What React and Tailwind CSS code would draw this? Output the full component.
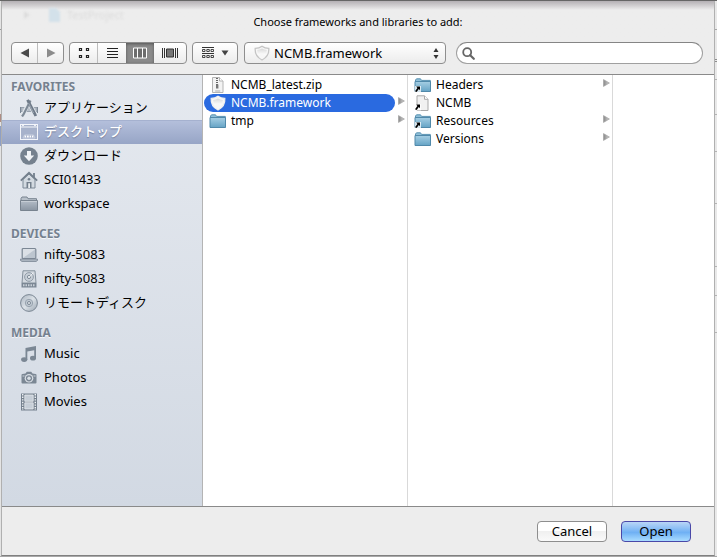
import React from "react";

const JP = "font-['Noto_Sans','Noto_Sans_CJK_JP',sans-serif]";

function Svg({ w = 18, h = 18, children }) {
  return (
    <svg width={w} height={h} viewBox={`0 0 ${w} ${h}`} className="block shrink-0" aria-hidden="true">
      {children}
    </svg>
  );
}

function Gradients() {
  return (
    <svg width="0" height="0" className="absolute" aria-hidden="true">
      <defs>
        <linearGradient id="steel" x1="0" y1="0" x2="0" y2="1">
          <stop offset="0" stopColor="#b4bdc8" />
          <stop offset="1" stopColor="#8a95a2" />
        </linearGradient>
        <linearGradient id="pale" x1="0" y1="0" x2="1" y2="1">
          <stop offset="0" stopColor="#a9b3be" />
          <stop offset="0.5" stopColor="#dbe1e7" />
          <stop offset="1" stopColor="#98a4b0" />
        </linearGradient>
        <linearGradient id="blueFolder" x1="0" y1="0" x2="0" y2="1">
          <stop offset="0" stopColor="#a6cfe4" />
          <stop offset="1" stopColor="#65a3c5" />
        </linearGradient>
        <linearGradient id="shieldFill" x1="0" y1="0" x2="0" y2="1">
          <stop offset="0" stopColor="#d9d9d9" />
          <stop offset="1" stopColor="#ffffff" />
        </linearGradient>
        <linearGradient id="arrowFill" x1="0" y1="0" x2="1" y2="0">
          <stop offset="0" stopColor="#888888" />
          <stop offset="1" stopColor="#d4d4d4" />
        </linearGradient>
      </defs>
    </svg>
  );
}

const AppsIcon = () => (
  <Svg>
    <path d="M1 8.500h16v4H1z" fill="#b4bdc7" stroke="#8a95a2" strokeWidth=".8" />
    <path d="M.5 8v6M17.500 8v6" stroke="#7d8996" />
    <path d="M9.500 2 2.800 16.500" stroke="#e2e7ec" strokeWidth="4" />
    <path d="M8 2 15.500 16" stroke="#e2e7ec" strokeWidth="4.500" />
    <path d="M10.500 1.500 3.500 15.500 2 17.500" fill="none" stroke="#7d8996" strokeWidth="2.200" />
    <path d="M7.500 .8 14.600 14.500l1.200 2.500" fill="none" stroke="#6f7b89" strokeWidth="2.800" />
    <path d="M8.500 4 13.600 14" stroke="#a9b3be" strokeWidth=".8" />
  </Svg>
);

const DesktopIcon = () => (
  <Svg>
    <rect x=".5" y="1.5" width="17" height="15" fill="#a7b2cb" stroke="#f4f6fb" />
    <path d="M1 4h16" stroke="#f4f6fb" />
    <path d="M2 2.600h2M14 2.600h2" stroke="#f4f6fb" />
    <path d="M3 15 4.500 12h9l1.500 3z" fill="#8f9cbb" stroke="#dfe4f0" strokeWidth=".6" />
    <path d="M4.500 13.500h1.800M7 13.500h1.800M9.500 13.500h1.800M12 13.500h1.500" stroke="#fff" strokeWidth="1.800" />
  </Svg>
);

const DownloadIcon = () => (
  <Svg>
    <circle cx="9" cy="9" r="8.8" fill="#75818e" />
    <path d="M7 4h4v4.500h3.200L9 14.200 3.800 8.500H7z" fill="#f0f3f6" />
  </Svg>
);

const HomeIcon = () => (
  <Svg>
    <path d="M13 2h2v5h-2z" fill="#7d8996" />
    <path d="M3 8.500 9 3l6 5.500v8.500H3z" fill="#d3dae1" stroke="#7d8996" />
    <path d="M.8 9.600 9 1.800l8.200 7.800" fill="none" stroke="#74808d" strokeWidth="1.800" />
    <circle cx="9" cy="8.200" r="1.300" fill="#74808d" />
    <path d="M6.500 11h5v6h-5z" fill="#74808d" />
    <path d="M8.200 12.200h1.800V17H8.200z" fill="#e9edf0" />
  </Svg>
);

const SideFolderIcon = () => (
  <Svg>
    <path d="M1 14V3.500L2 2h5l1 1.700h8.500V14z" fill="#b9c1ca" stroke="#78838f" />
    <path d="M.5 5.500h17v10H.5z" fill="url(#steel)" stroke="#78838f" />
    <path d="M1 6.500h16" stroke="#c6cdd5" />
  </Svg>
);

const LaptopIcon = () => (
  <Svg>
    <rect x="2.200" y="2.500" width="13.600" height="10" rx="1" fill="#dbe0e6" stroke="#7b8794" strokeWidth="1.200" />
    <path d="M3 12 15 3.500V12z" fill="#bcc5cf" />
    <path d="M.5 13h17v1.500l-1.500 1H2l-1.500-1z" fill="#aab4bf" stroke="#7b8794" strokeWidth=".8" />
  </Svg>
);

const DriveIcon = () => (
  <Svg>
    <path d="M3 .800h12l1 12.200H2z" fill="#d3d9e0" stroke="#84909c" />
    <circle cx="9" cy="7" r="4.400" fill="#c6ced6" stroke="#929da9" />
    <circle cx="9" cy="7" r="1.600" fill="#e9edf0" stroke="#808c99" />
    <path d="M9.500 7 13 3" stroke="#f2f4f6" />
    <path d="M1.500 13h15v4.500h-15z" fill="#7b8794" />
    <path d="M3 15.300h12" stroke="#c9d0d8" strokeWidth="2" strokeDasharray="1.5 1" />
  </Svg>
);

const DiscIcon = () => (
  <Svg>
    <circle cx="9" cy="9" r="8.4" fill="url(#pale)" stroke="#7b8794" />
    <circle cx="9" cy="9" r="3.7" fill="#c0c9d2" stroke="#98a3af" />
    <circle cx="9" cy="9" r="1.500" fill="#e6eaee" stroke="#7b8794" />
  </Svg>
);

const MusicIcon = () => (
  <Svg>
    <path d="M5.500 3 16 1v12.500h-1.800V5.300L7.300 6.600V15H5.500z" fill="#7b8794" />
    <ellipse cx="4.200" cy="14.600" rx="3.100" ry="2.400" fill="#7b8794" />
    <ellipse cx="13" cy="13.200" rx="3" ry="2.400" fill="#7b8794" />
  </Svg>
);

const CameraIcon = () => (
  <Svg>
    <path d="M2.500 5 5.500 4.500 6.800 2.800h4.400L12.500 4.500l3 .5q1 .2 1 1v7.500q0 1-1 1h-13q-1 0-1-1V6q0-1 1-1z" fill="#7b8794" />
    <circle cx="9" cy="9.300" r="4.300" fill="#d9dfe5" />
    <circle cx="9" cy="9.300" r="3.100" fill="#7b8794" />
    <circle cx="9" cy="9.300" r="1.700" fill="#d9dfe5" />
    <path d="M2.500 7h2M13.500 7h2" stroke="#cdd4db" />
  </Svg>
);

const FilmIcon = () => (
  <Svg>
    <path d="M1 .5h16v17H1z" fill="#75818e" />
    <path d="M2.700 1v16M15.300 1v16" stroke="#eef1f4" strokeWidth="1.400" strokeDasharray="1.4 1.2" />
    <path d="M4.800 2h8.400v6.300H4.800zM4.800 9.800h8.400V16H4.800z" fill="#c6ced7" stroke="#e8ecf0" strokeWidth=".8" />
  </Svg>
);

const AliasArrow = () => (
  <g>
    <path d="M1 9h6v6.500H1z" fill="#fff" opacity=".75" />
    <path d="M2.200 9.500H6v3.800L4.800 12 2.600 15 1 14.300l2.400-3.400z" fill="#000" />
  </g>
);

const BlueFolder = ({ alias }) => (
  <Svg w={18} h={16}>
    <path d="M1.500 14V3L2.500 1.800h4L7.500 3.400h8.800V14z" fill="#8fbfd8" stroke="#5b93b3" />
    <path d="M1 4.500h15.500v10H1z" fill="url(#blueFolder)" stroke="#5089aa" />
    {alias && <AliasArrow />}
  </Svg>
);

const PageAlias = () => (
  <Svg w={18} h={16}>
    <path d="M3 .8h7.500L14 4.300v11.200H3z" fill="#f1f1f1" stroke="#a9a9a9" />
    <path d="M10.500.8v3.500H14" fill="#fff" stroke="#a9a9a9" />
    <AliasArrow />
  </Svg>
);

const ZipIcon = () => (
  <Svg w={18} h={16}>
    <path d="M3.500.5h7L14 4v11.500H3.500z" fill="#f3f3f3" stroke="#b4b4b4" />
    <path d="M10.500.5V4H14" fill="#fff" stroke="#b4b4b4" />
    <path d="M8 1v7" stroke="#666" strokeWidth="2" strokeDasharray="1 1" />
    <path d="M7 7.500h2.400v4H7z" fill="#777" />
    <path d="M6.200 14h5" stroke="#999" strokeWidth=".8" />
  </Svg>
);

const Shield = ({ outline = "#eeeeee" }) => (
  <Svg w={18} h={16}>
    <path
      d="M9 1.200Q11.800 3.200 15.800 3.400q.6 8-6.800 11.600Q1.600 11.400 2.200 3.400 6.200 3.200 9 1.200z"
      fill="#f7f7f7"
      stroke={outline}
      strokeWidth="1.300"
    />
    <path d="M9 3.600q2.200 1.300 4.800 1.500-.2 4-1.600 5L9 8.300 5.800 10.100q-1.400-1-1.600-5Q6.800 4.900 9 3.600z" fill="url(#shieldFill)" />
  </Svg>
);

const RowArrow = () => (
  <svg width="7" height="8" viewBox="0 0 7 8" className="mb-1 shrink-0" aria-hidden="true">
    <path d="M.5.600 6.400 4 .5 7.400z" fill="url(#arrowFill)" stroke="#a4a4a4" strokeWidth=".7" />
  </svg>
);

const sections = [
  {
    title: "FAVORITES",
    items: [
      { label: "アプリケーション", Icon: AppsIcon },
      { label: "デスクトップ", Icon: DesktopIcon, selected: true },
      { label: "ダウンロード", Icon: DownloadIcon },
      { label: "SCI01433", Icon: HomeIcon },
      { label: "workspace", Icon: SideFolderIcon },
    ],
  },
  {
    title: "DEVICES",
    items: [
      { label: "nifty-5083", Icon: LaptopIcon },
      { label: "nifty-5083", Icon: DriveIcon },
      { label: "リモートディスク", Icon: DiscIcon },
    ],
  },
  {
    title: "MEDIA",
    items: [
      { label: "Music", Icon: MusicIcon },
      { label: "Photos", Icon: CameraIcon },
      { label: "Movies", Icon: FilmIcon },
    ],
  },
];

function Sidebar() {
  return (
    <nav className="w-[201px] shrink-0 border-r border-[#b4b4b4] bg-linear-to-b from-[#e5e9ef] to-[#d2d9e3] pt-px">
      {sections.map((s, i) => (
        <section key={s.title}>
          <h2
            className={
              "flex items-end pl-[9px] text-[12px] leading-[18px] font-bold text-[#75818f] [text-shadow:0_1px_0_#f3f5f8] " +
              (i === 0 ? "h-5" : "h-[27px]")
            }
          >
            {s.title}
          </h2>
          <ul>
            {s.items.map(({ label, Icon, selected }, j) => (
              <li key={j}>
                <button
                  type="button"
                  className={
                    "flex h-6 w-full items-center gap-1.5 pl-[18px] text-left text-[13px] " +
                    (selected
                      ? "bg-linear-to-b from-[#b5c0dc] to-[#97a5c6] font-medium text-white shadow-[inset_0_1px_0_#a5b1cf] [text-shadow:0_1px_1px_#6f7c9c]"
                      : "text-black")
                  }
                >
                  <Icon />
                  {label}
                </button>
              </li>
            ))}
          </ul>
        </section>
      ))}
    </nav>
  );
}

function FileRow({ icon, label, arrow, selected }) {
  return (
    <li className="flex h-[18px] items-center justify-between pr-[2px]">
      <button
        type="button"
        className={
          "flex h-[18px] w-[191px] items-center gap-1 rounded-full pl-[5px] text-left text-[12px] " +
          (selected ? "bg-[#2a6ae0] text-white" : "text-black")
        }
      >
        {icon}
        {label}
      </button>
      {arrow && <RowArrow />}
    </li>
  );
}

const seg = "flex h-full items-center justify-center";
const box = "flex h-[22px] shrink-0 items-stretch overflow-hidden rounded-[4px] border border-[#8e8e8e] bg-linear-to-b from-white to-[#ececec]";

function Toolbar() {
  return (
    <div className="flex items-center pt-[7px] pr-[11px] pl-[9px]">
      <div className={box + " w-[53px]"}>
        <button type="button" aria-label="Back" className={seg + " w-[26px] border-r border-[#bdbdbd]"}>
          <Svg w={10} h={10}><path d="M9 .5v9L.5 5z" fill="#4a4a4a" /></Svg>
        </button>
        <button type="button" aria-label="Forward" className={seg + " flex-1"}>
          <Svg w={10} h={10}><path d="M1 .5v9L9.500 5z" fill="#8c8c8c" /></Svg>
        </button>
      </div>
      <div className={box + " ml-[5px] w-[118px]"}>
        <button type="button" aria-label="Icon view" className={seg + " w-7 border-r border-[#bdbdbd]"}>
          <Svg w={12} h={12}>
            <path d="M1.500 1.500h2v2h-2zM8.500 1.500h2v2h-2zM1.500 8.500h2v2h-2zM8.500 8.500h2v2h-2z" fill="none" stroke="#222" strokeWidth="1.200" />
          </Svg>
        </button>
        <button type="button" aria-label="List view" className={seg + " w-7"}>
          <Svg w={11} h={12}><path d="M0 1.500h11M0 4.500h11M0 7.500h11M0 10.500h11" stroke="#222" /></Svg>
        </button>
        <button
          type="button"
          aria-label="Column view"
          aria-pressed="true"
          className={seg + " w-7 bg-[#8a8a8a] shadow-[inset_0_1px_3px_#555]"}
        >
          <Svg w={14} h={12}>
            <path d="M.5 1h13v10H.5zM4.500 1v10M9.500 1v10" fill="#6d6d6d" stroke="#fff" />
          </Svg>
        </button>
        <button type="button" aria-label="Cover Flow view" className={seg + " flex-1"}>
          <Svg w={16} h={12}>
            <path d="M4.500 2h7v8h-7z" fill="#777" stroke="#333" />
            <path d="M.5 1v10M2.500 1v10M13.500 1v10M15.500 1v10" stroke="#333" />
          </Svg>
        </button>
      </div>
      <div className={box + " ml-[5px] w-[46px]"}>
        <button type="button" aria-label="Arrange items" className={seg + " w-full gap-[7px]"}>
          <Svg w={12} h={12}>
            <path d="M0 .5h12M0 6.500h12" stroke="#333" />
            <path d="M.5 2.500H3v2H.5zM4.800 2.500h2.500v2H4.800zM9 2.500h2.500v2H9zM.5 8.500H3v2H.5zM4.800 8.500h2.500v2H4.800zM9 8.500h2.500v2H9z" fill="none" stroke="#333" strokeWidth=".9" />
          </Svg>
          <Svg w={8} h={6}><path d="M.5.500h7L4 5.500z" fill="#444" /></Svg>
        </button>
      </div>
      <div className={box + " relative ml-1.5 w-[202px]"}>
        <select
          aria-label="Location"
          className="w-full appearance-none bg-transparent pl-[29px] text-[13px] leading-5 text-black outline-none"
        >
          <option>NCMB.framework</option>
        </select>
        <span className="pointer-events-none absolute inset-y-0 left-2 flex items-center">
          <Shield outline="#c4c4c4" />
        </span>
        <span className="pointer-events-none absolute inset-y-0 right-1.5 flex items-center">
          <Svg w={6} h={11}><path d="M3 0 5.500 4h-5zM3 11 .5 7h5z" fill="#333" /></Svg>
        </span>
      </div>
      <label className="ml-2.5 flex h-[22px] min-w-0 flex-1 items-center rounded-full border border-[#a0a0a0] border-t-[#858585] bg-white pl-[5px]">
        <Svg w={13} h={13}>
          <circle cx="5.200" cy="5.200" r="4" fill="none" stroke="#666" strokeWidth="1.800" />
          <path d="M8.200 8.200l3.600 3.600" stroke="#666" strokeWidth="2.200" strokeLinecap="round" />
        </Svg>
        <input type="search" aria-label="Search" className="min-w-0 flex-1 bg-transparent px-1 text-[13px] outline-none" />
      </label>
    </div>
  );
}

const dialogButton = "h-[21px] w-[70px] rounded-[4px] border text-[13px] leading-[19px] text-black";

/* Slivers of the project window that show on either side of the sheet. */
function LeftEdge() {
  return (
    <div aria-hidden="true" className="flex w-px shrink-0 flex-col bg-[#e4e4e4]">
      <span className="mt-7 h-px bg-[#999999]" />
      <span className="mt-[84px] h-2 bg-[#b08d84]" />
      <span className="mt-1 h-5 bg-[#8f9fc4]" />
    </div>
  );
}

function RightEdge() {
  return (
    <div aria-hidden="true" className="flex w-[2px] shrink-0 flex-col bg-[#e9e9e9]">
      <span className="mt-7 h-px bg-[#a8a8a8]" />
      <span className="mt-[29px] h-[3px] border-y border-[#8e8e8e]" />
      <span className="mt-[17px] h-px bg-[#b4b4b4]" />
      <span className="mt-[34px] h-px bg-[#b4b4b4]" />
      <span className="mt-9 h-px bg-[#b4b4b4]" />
      <span className="mt-[51px] h-px bg-[#b4b4b4]" />
      <span className="mt-[62px] h-px bg-[#b4b4b4]" />
      <span className="mt-7 h-px bg-[#b4b4b4]" />
      <span className="mt-9 h-px bg-[#b4b4b4]" />
    </div>
  );
}

export default function App() {
  return (
    <div className={"flex min-h-screen border-t border-t-[#666666] border-b border-b-[#a8a8a8] " + JP}>
      <Gradients />
      <LeftEdge />
      <main className="flex min-w-0 flex-1 flex-col border-x border-b border-x-[#b0b0b0] border-b-[#808080] bg-[#ededed]">
        <header className="relative h-[74px] border-b border-[#8a8a8a] bg-linear-to-b from-[#b4b0b4] via-[#ededed] via-[9px] to-[#ededed]">
          <div aria-hidden="true" className="absolute top-1.5 left-[21px] flex items-center gap-[18px] text-[11px] text-[#dcdcdc] blur-[1px]">
            <Svg w={8} h={8}><path d="M1 0v8l6-4z" fill="#dcdcdc" /></Svg>
            <span className="flex items-center gap-[7px]">
              <Svg w={11} h={14}><path d="M0 0h7l4 4v10H0z" fill="#d3e1ea" /></Svg>
              TestProject
            </span>
          </div>
          <h1 className="pt-[13px] text-center text-[11px] leading-[15px] text-black">
            Choose frameworks and libraries to add:
          </h1>
          <div className="pt-1.5">
            <Toolbar />
          </div>
        </header>
        <div className="flex min-h-0 flex-1 bg-white">
          <Sidebar />
          <ul className="w-[205px] shrink-0 border-r border-[#d9d9d9] pt-px pl-px">
            <FileRow icon={<ZipIcon />} label="NCMB_latest.zip" />
            <FileRow icon={<Shield />} label="NCMB.framework" arrow selected />
            <FileRow icon={<BlueFolder />} label="tmp" arrow />
          </ul>
          <ul className="w-[205px] shrink-0 border-r border-[#d9d9d9] pt-px pl-px">
            <FileRow icon={<BlueFolder alias />} label="Headers" arrow />
            <FileRow icon={<PageAlias />} label="NCMB" />
            <FileRow icon={<BlueFolder alias />} label="Resources" arrow />
            <FileRow icon={<BlueFolder />} label="Versions" arrow />
          </ul>
          <div className="flex-1" />
        </div>
        <footer className="flex h-[49px] items-center justify-end gap-3.5 border-t border-[#8a8a8a] pr-[23px]">
          <button type="button" className={dialogButton + " border-[#8e8e8e] bg-linear-to-b from-white from-50% via-[#f0f0f0] via-50% to-[#fafafa]"}>
            Cancel
          </button>
          <button type="button" className={dialogButton + " border-[#4a48a8] bg-linear-to-b from-[#b9d5f6] via-[#6fb0f4] via-55% to-[#a9dcff]"}>
            Open
          </button>
        </footer>
      </main>
      <RightEdge />
    </div>
  );
}
